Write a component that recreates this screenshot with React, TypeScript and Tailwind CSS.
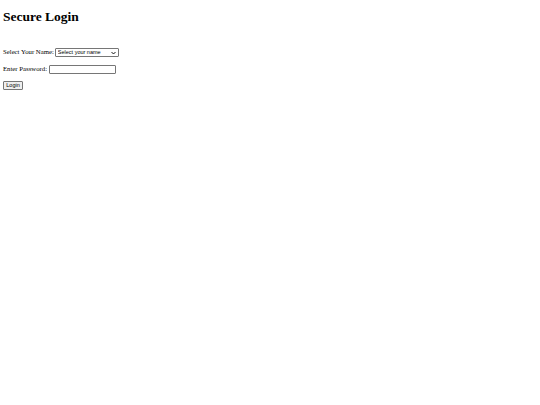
import React from 'react';

export default function App() {
  return (
    <div className="min-h-[405px] bg-white px-[3px] pt-px font-['Liberation_Serif',serif] text-black text-[6.75px]">
      <h1 className="mt-[8px] text-[13.5px] font-bold leading-[16px]">Secure Login</h1>

      <form className="mt-[23px] flex flex-col items-start gap-[7.5px]">
        {/* name row */}
        <div className="flex items-center h-[9px]">
          <label className="mr-[1px]">Select Your Name:</label>
          <span className="relative flex items-center">
            <select
              defaultValue=""
              className="appearance-none w-[64px] h-[9px] pl-[2px] border border-[#767676] rounded-[1px] bg-white font-['Liberation_Sans',sans-serif] text-[5.5px] leading-none text-black"
            >
              <option value="">Select your name</option>
            </select>
            <svg className="absolute right-[3px] w-[5px] h-[4px] pointer-events-none" viewBox="0 0 10 6">
              <path d="M1 1l4 4 4-4" fill="none" stroke="#000" strokeWidth="1.8" />
            </svg>
          </span>
        </div>

        {/* password row */}
        <div className="flex items-center h-[9px]">
          <label className="mr-[1.5px]">Enter Password:</label>
          <input
            type="password"
            className="w-[67px] h-[9px] border border-[#767676] rounded-[1px] bg-white"
          />
        </div>

        {/* submit */}
        <button
          type="button"
          className="w-[20px] h-[9px] border border-[#767676] rounded-[1px] bg-[#efefef] font-['Liberation_Sans',sans-serif] text-[5.5px] leading-none text-black"
        >
          Login
        </button>
      </form>
    </div>
  );
}
